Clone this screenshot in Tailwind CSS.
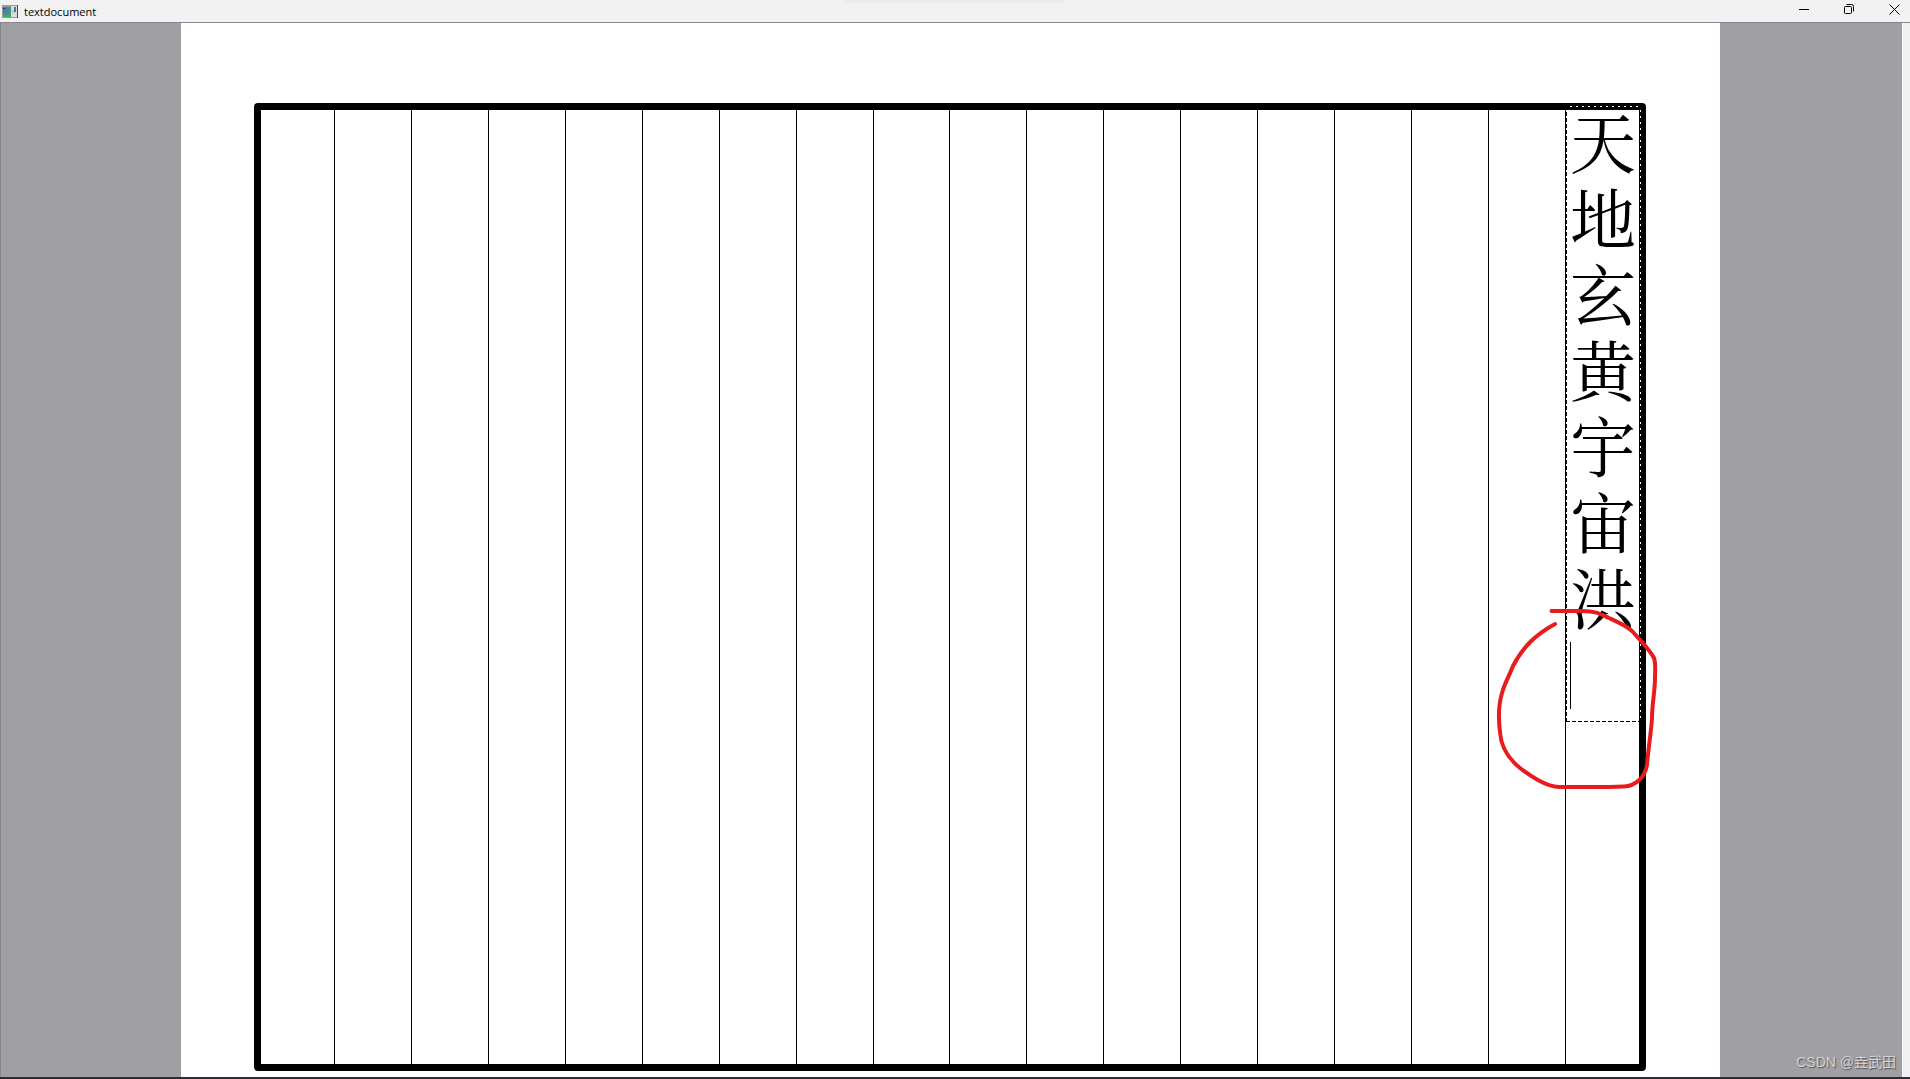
<!DOCTYPE html>
<html lang="zh-CN">
<head>
  <meta charset="UTF-8" />
  <meta name="viewport" content="width=device-width, initial-scale=1.0" />
  <title>textdocument</title>
  <script src="https://cdn.jsdelivr.net/npm/@tailwindcss/browser@4"></script>
</head>
<body class="relative h-screen flex flex-col overflow-hidden bg-[#f2f2f2] text-black font-['Open_Sans','Noto_Sans_CJK_SC',sans-serif]">

  <!-- Title bar -->
  <header class="relative flex h-[22px] shrink-0 items-center justify-between pr-px pl-[2px]">
    <div class="flex items-center gap-[6px]">
      <svg class="h-[13px] w-4" viewBox="0 0 16 13" shape-rendering="crispEdges" aria-hidden="true">
        <rect width="16" height="13" fill="#9a9ca2" />
        <rect x="1" y="2" width="8" height="10" fill="#4a8f86" />
        <rect x="1" y="2" width="4" height="5" fill="#5878a4" />
        <rect x="1" y="3" width="2" height="1" fill="#4020a0" />
        <rect x="1" y="10" width="7" height="2" fill="#22c04a" />
        <rect x="9" y="1" width="6" height="11" fill="#dcdcde" />
        <rect x="10" y="5" width="2" height="4" fill="#c4c8cc" />
        <rect x="12" y="2" width="2" height="5" fill="#208c8c" />
        <rect x="15" y="0" width="1" height="13" fill="#4a4a4c" />
      </svg>
      <h1 class="pt-px text-[11px] leading-4">textdocument</h1>
    </div>
    <div class="flex h-full items-start gap-[15px]">
      <button type="button" aria-label="Minimize" class="flex h-[18px] w-[30px] items-center justify-center">
        <svg class="size-[11px]" viewBox="0 0 11 11" fill="none" stroke="#000" aria-hidden="true"><path d="M0 5.5h10" /></svg>
      </button>
      <button type="button" aria-label="Restore" class="flex h-[18px] w-[30px] items-center justify-center">
        <svg class="size-[11px]" viewBox="0 0 11 11" fill="none" stroke="#000" aria-hidden="true"><rect x=".5" y="2.5" width="7" height="7" rx="1" /><path d="M2.5 .5h5a2 2 0 0 1 2 2v5" /></svg>
      </button>
      <button type="button" aria-label="Close" class="flex h-[18px] w-[30px] items-center justify-center">
        <svg class="size-[11px]" viewBox="0 0 11 11" fill="none" stroke="#000" aria-hidden="true"><path d="M.5 .5l10 10M10.5 .5l-10 10" /></svg>
      </button>
    </div>
    <div class="absolute -top-1 left-1/2 h-[3px] w-[220px] -translate-x-1/2 rounded-full shadow-[0_0_6px_rgba(0,0,0,0.15)]"></div>
  </header>

  <!-- Document view -->
  <main class="flex min-h-0 flex-1 border-t border-l border-[#828790]">
    <div class="flex flex-1 border-r border-white bg-[#a0a0a4] pr-[182px] pl-[180px]">
      <section class="flex flex-1 bg-white pt-20 pr-[74px] pb-[6px] pl-[73px]">
        <div class="flex flex-1 rounded-[4px] border-[7px] border-black">
          <div class="-mr-[3px] -ml-1 grid flex-1 grid-cols-18">
            <div></div>
            <div class="border-l border-black"></div>
            <div class="border-l border-black"></div>
            <div class="border-l border-black"></div>
            <div class="border-l border-black"></div>
            <div class="border-l border-black"></div>
            <div class="border-l border-black"></div>
            <div class="border-l border-black"></div>
            <div class="border-l border-black"></div>
            <div class="border-l border-black"></div>
            <div class="border-l border-black"></div>
            <div class="border-l border-black"></div>
            <div class="border-l border-black"></div>
            <div class="border-l border-black"></div>
            <div class="border-l border-black"></div>
            <div class="border-l border-black"></div>
            <div class="border-l border-black"></div>
            <div class="relative border-l border-black">
              <!-- Text being edited -->
              <div class="absolute -top-1 left-0 h-[616px] w-[75px]">
                <textarea aria-label="Text" spellcheck="false" class="-mt-1 block size-full resize-none overflow-hidden pl-1 text-[66px] leading-[76px] outline-none font-['Noto_Serif_CJK_SC','Noto_Sans_CJK_SC',serif]">天地玄黄宇宙洪</textarea>
                <svg class="pointer-events-none absolute inset-0 size-full" viewBox="0 0 75 616" fill="none" aria-hidden="true">
                  <rect x=".5" y=".5" width="74" height="615" stroke="#fff" />
                  <path d="M0 .5h75M0 615.5h75M.5 0v616M74.5 0v616" stroke="#000" stroke-dasharray="4 2" />
                  <path d="M4.500 536v67" stroke="#000" />
                </svg>
              </div>
              <!-- Red pen mark -->
              <svg class="pointer-events-none absolute top-[490px] -left-[76px] h-[200px] w-[180px]" viewBox="1490 600 180 200" fill="none" stroke="#e81c1c" stroke-width="4" stroke-linecap="round" stroke-linejoin="round" aria-hidden="true">
                <path d="M1551.500 611H1582C1598 611 1602 615 1609 618C1620 623 1627 626 1632 631C1641 641 1650 650 1654 658C1656 664 1655 671 1655 678C1655 691 1652 704 1652 718C1651 734 1648 750 1647 765C1645 777 1636 786 1624 786.500C1602 787.500 1579 787 1559 787C1547 787 1530 776 1520 768C1509 759 1501 748 1500 732C1498 716 1499 703 1502 693C1504 685 1510 674 1513 666C1523 647 1535 635 1555 624" />
              </svg>
            </div>
          </div>
        </div>
      </section>
    </div>
    <div class="w-[7px] bg-[#f0f0f0]"></div>
  </main>
  <footer class="h-[2px] shrink-0 bg-[#2b2d30]"></footer>

  <p class="absolute right-[14px] bottom-[5px] text-[14px] leading-6 text-[#d4d4d6] [text-shadow:1px_1px_1px_#555] font-['Liberation_Sans','Noto_Sans_CJK_SC',sans-serif]">CSDN @垚武田</p>

</body>
</html>
